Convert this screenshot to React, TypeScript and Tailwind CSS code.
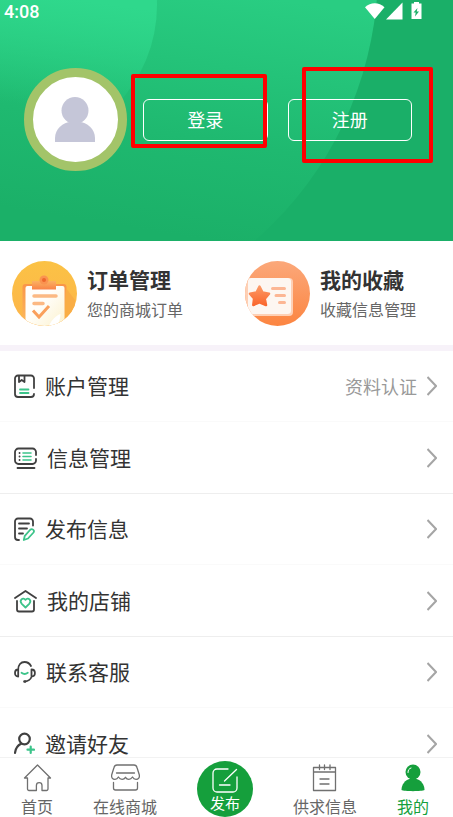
import type { ReactNode } from "react";

const statusIcons = (
  <svg width="58" height="18" viewBox="0 0 58 18" fill="#fff" aria-hidden="true">
    <path d="M0 5.2C5.500 -.2 14 -.2 19.500 5.200L9.750 17Z" />
    <path d="M37.500 .500V17.500H21Z" />
    <path
      fillRule="evenodd"
      d="M49 0h5v1.500h2.500v15.500h-10V1.500H49ZM52.500 6l-4 4.500h2.200l-.7 4 4-5h-2.300Z"
    />
  </svg>
);

function OrderIcon() {
  return (
    <svg width="65" height="65" viewBox="0 0 65 65" className="shrink-0" aria-hidden="true">
      <defs>
        <linearGradient id="orderBg" x1="0" y1="0" x2="0" y2="1">
          <stop offset="0" stopColor="#fbc245" />
          <stop offset="1" stopColor="#fdb44a" />
        </linearGradient>
        <linearGradient id="orderClip" x1="0" y1="0" x2="0" y2="1">
          <stop offset="0" stopColor="#fbb262" />
          <stop offset="1" stopColor="#f98347" />
        </linearGradient>
        <linearGradient id="orderSide" x1="0" y1="0" x2="0" y2="1">
          <stop offset="0" stopColor="#fa9548" />
          <stop offset="1" stopColor="#fcbf60" />
        </linearGradient>
        <linearGradient id="orderPaper" x1="0" y1="0" x2="1" y2="1">
          <stop offset="0.4" stopColor="#fffefa" />
          <stop offset="1" stopColor="#fcf0c8" />
        </linearGradient>
        <clipPath id="orderCircle">
          <circle cx="32.500" cy="32.500" r="32.500" />
        </clipPath>
      </defs>
      <g clipPath="url(#orderCircle)">
        <rect width="65" height="65" fill="url(#orderBg)" />
        <rect x="10.500" y="23" width="44" height="46" rx="3" fill="url(#orderSide)" />
        <path d="M54 27l9 12v27H52Z" fill="#f9ad45" />
        <rect x="13.500" y="25" width="39" height="45" rx="2" fill="url(#orderPaper)" />
        <path d="M48.500 53c-4 1-10 7-12 13h8c2-3 4-9 4-13Z" fill="#fff" />
        <path d="M20 20h24v8.500H20Z" fill="url(#orderClip)" />
        <circle cx="32" cy="19" r="4.500" fill="#fa9350" />
        <circle cx="32" cy="19" r="2" fill="#ed672c" />
        <g stroke="#fcb983" strokeWidth="3.500" strokeLinecap="round" fill="none">
          <path d="M22 35h22M22 42.500h9" />
          <path d="M21 49.500l6 6.500 10-11" stroke="#faa05c" strokeWidth="3" strokeLinecap="butt" />
        </g>
      </g>
    </svg>
  );
}

function FavoriteIcon() {
  return (
    <svg width="65" height="65" viewBox="0 0 65 65" className="shrink-0" aria-hidden="true">
      <defs>
        <linearGradient id="favBg" x1="0" y1="0" x2="0" y2="1">
          <stop offset="0" stopColor="#fba87a" />
          <stop offset="1" stopColor="#fc8541" />
        </linearGradient>
        <linearGradient id="favStar" x1="0" y1="0" x2="0" y2="1">
          <stop offset="0" stopColor="#fc9865" />
          <stop offset="1" stopColor="#fa672e" />
        </linearGradient>
        <clipPath id="favCircle">
          <circle cx="32.500" cy="32.500" r="32.500" />
        </clipPath>
      </defs>
      <g clipPath="url(#favCircle)">
        <rect width="65" height="65" fill="url(#favBg)" />
        <rect x="-3" y="17" width="51" height="38" rx="4" fill="#fed0b5" />
        <rect x="3" y="17" width="43" height="36" rx="3.500" fill="#fdf6f1" />
        <path
          d="M14.500 25.500l3 6 6.500 1.200-4.200 5 1.200 6.300-6.500-2.700-6.200 2.700.8-6.500-4.100-4.800 6.500-1.200Z"
          fill="url(#favStar)"
          stroke="url(#favStar)"
          strokeWidth="2.500"
          strokeLinejoin="round"
        />
        <path d="M27.500 27.500H39.500M31 34.500H39.500M34.500 41.500H39.500" stroke="#fcb694" strokeWidth="3" strokeLinecap="round" />
      </g>
    </svg>
  );
}

type LineIconProps = { children: ReactNode; width?: number };

function LineIcon({ children, width = 22 }: LineIconProps) {
  return (
    <svg
      width={width}
      height="24"
      viewBox={`0 0 ${width} 24`}
      className="shrink-0"
      fill="none"
      stroke="#404040"
      strokeWidth="1.8"
      strokeLinecap="round"
      strokeLinejoin="round"
      aria-hidden="true"
    >
      {children}
    </svg>
  );
}

const menu = [
  {
    label: "账户管理",
    note: "资料认证",
    icon: (
      <LineIcon width={21}>
        <path d="M20 14V4.500a3 3 0 0 0-3-3H4a3 3 0 0 0-3 3V20a3 3 0 0 0 3 3h13a3 3 0 0 0 3-3M5 1.500v6.500l2.700-2 2.800 2V1.500" />
        <path d="M6 15.500h8.500M6 19h8.500" stroke="#3cc48a" />
      </LineIcon>
    ),
  },
  {
    label: "信息管理",
    icon: (
      <LineIcon width={23}>
        <path d="M22 9V6a3.500 3.500 0 0 0-3.500-3.500h-14A3.500 3.500 0 0 0 1 6v8.500A3.500 3.500 0 0 0 4.500 18h14a3.500 3.500 0 0 0 3.500-3.500V13M3.500 22h17" />
        <path d="M5.500 7h.1M5.500 10.500h.1M5.500 14h.1" />
        <path d="M9 7h8M9 10.500h8M9 14h8" stroke="#3cc48a" strokeWidth="1.6" />
      </LineIcon>
    ),
  },
  {
    label: "发布信息",
    icon: (
      <LineIcon width={21}>
        <path d="M19 8.500V4.500a3 3 0 0 0-3-3H4a3 3 0 0 0-3 3V20a3 3 0 0 0 3 3h1M5 6.500h10M5 11.500h8M5 16.500h4" />
        <path d="M9.800 23l1-4.200 5.200-5.800c2-2 5 .2 3.500 2.500l-5.500 6Z" stroke="#3cc48a" />
      </LineIcon>
    ),
  },
  {
    label: "我的店铺",
    icon: (
      <LineIcon width={23}>
        <path d="M1 9L11.500 2 22 9M3 12v8.500a2 2 0 0 0 2 2h13a2 2 0 0 0 2-2V12" />
        <path d="M11.500 18.500l-3.700-3.700c-3-3.500 1-7 3.700-4 2.700-3 6.700.5 3.700 4Z" stroke="#3cc48a" />
      </LineIcon>
    ),
  },
  {
    label: "联系客服",
    icon: (
      <LineIcon>
        <path d="M4.200 9.500v7C2 16.500 1 15 1 13s1-3.500 3.200-3.500C4.200 5 6.800 2 10.500 2c3 0 5 1.200 6.500 4M17.500 9.500v7c2.400 0 3.400-1.500 3.400-3.500s-1-3.500-3.400-3.500ZM17.500 17c-1.200 2.800-3.300 4.300-6.500 4.500" />
        <path d="M10.500 21.500h.5" strokeWidth="2.600" />
        <path d="M7.500 12.800c2 1.500 4.300 1.500 6.300 0" stroke="#3cc48a" />
      </LineIcon>
    ),
  },
  {
    label: "邀请好友",
    icon: (
      <LineIcon width={21}>
        <g strokeWidth="2.2">
          <circle cx="10.500" cy="7" r="5.300" />
          <path d="M7 11.800c-3.500 1.700-5.500 4.700-6 9.200" />
          <path d="M16.700 14.500v6.500M13.500 17.700h6.500" stroke="#3cc48a" />
        </g>
      </LineIcon>
    ),
  },
];

const navIcons: Record<string, ReactNode> = {
  home: (
    <path d="M1.500 14L14.500 1l13 13H25v11a1.500 1.500 0 0 1-1.500 1.500H19V21.500a2.800 2.800 0 0 0-5.600 0v5H6A1.500 1.500 0 0 1 4.500 25V14Z" />
  ),
  shop: (
    <>
      <path d="M6 1h17c1.600 0 2.600.9 3 2.500l2.200 7c.8 3-.9 4.800-3.200 4.800-1.700 0-2.700-.8-3.500-2.300-1 1.500-2.100 2.300-3.700 2.300-1.500 0-2.600-.8-3.300-2-.8 1.200-1.900 2-3.400 2-1.600 0-2.700-.8-3.700-2.300-.8 1.500-1.800 2.300-3.400 2.300-2.400 0-4-1.800-3.200-4.800l2.200-7C3.400 1.900 4.400 1 6 1Z" />
      <path d="M5.500 9h18M2.500 18.500v5.500a2 2 0 0 0 2 2h20a2 2 0 0 0 2-2v-5.500" />
    </>
  ),
  demand: <path d="M3.500 3.500h22V26.500h-22ZM3.500 8h22M9.500 1v4.500M14.500 1v4.500M20 1v4.500M10 15h9M10 20h9" />,
};

function NavItem({ label, icon }: { label: string; icon: string }) {
  return (
    <a href={`#${icon}`} className="flex flex-col items-center pt-[6px] text-[#666]">
      <svg
        width="29"
        height="28"
        viewBox="0 0 29 28"
        fill="none"
        stroke="#707070"
        strokeWidth="1.3"
        strokeLinejoin="round"
        strokeLinecap="round"
        aria-hidden="true"
      >
        {navIcons[icon]}
      </svg>
      <span className="mt-1 text-base leading-5">{label}</span>
    </a>
  );
}

export default function App() {
  return (
    <div className="flex h-screen flex-col overflow-hidden bg-white font-['Noto_Sans_CJK_SC',sans-serif] text-[#333]">
      <header className="relative h-[241px] shrink-0 overflow-hidden bg-[#1aaf68] text-white">
        <svg className="absolute left-0 top-0" width="453" height="241" viewBox="0 0 453 241" aria-hidden="true">
          <defs>
            <linearGradient id="bigArc" gradientUnits="userSpaceOnUse" x1="220" y1="-10" x2="180" y2="236">
              <stop offset="0" stopColor="#29cd82" />
              <stop offset="0.6" stopColor="#1fb970" />
              <stop offset="1" stopColor="#1bb068" />
            </linearGradient>
            <linearGradient id="smallArc" gradientUnits="userSpaceOnUse" x1="80" y1="0" x2="65" y2="110">
              <stop offset="0" stopColor="#2fd88c" />
              <stop offset="1" stopColor="#2fd88c" stopOpacity="0" />
            </linearGradient>
          </defs>
          <circle cx="19" cy="-30" r="359" fill="url(#bigArc)" />
          <circle cx="13" cy="5" r="144" fill="url(#smallArc)" />
        </svg>

        <div className="relative flex h-6 items-start justify-between pl-1 pr-[30px]">
          <span className="font-[Roboto] text-lg font-medium leading-6">4:08</span>
          <span className="pt-[2px]">{statusIcons}</span>
        </div>

        <div className="relative mt-11 flex items-center pl-6 pr-[41px]">
          <div className="size-[103px] shrink-0 rounded-full border-9 border-[#a3c469] bg-white">
            <svg viewBox="0 0 85 85" aria-label="头像" role="img">
              <g fill="#c5c6d8">
                <circle cx="42" cy="33.500" r="13.500" />
                <path d="M22 65v-4c0-9 8-16 16-16h8c8 0 16 7 16 16v4Z" />
              </g>
            </svg>
          </div>
          <div className="ml-4 flex flex-1 gap-5">
            <button className="h-[42px] flex-1 rounded-md border border-white pb-[2px] text-lg">登录</button>
            <button className="h-[42px] flex-1 rounded-md border border-white pb-[2px] text-lg">注册</button>
          </div>
        </div>

        {/* highlight boxes over the two buttons */}
        <div className="absolute left-[131px] top-[74px] h-[74px] w-[136px] rounded-xs border-4 border-[#ff0000]" />
        <div className="absolute left-[302px] top-[67px] h-[96px] w-[131px] rounded-xs border-4 border-[#ff0000]" />
      </header>

      <main className="flex-1 overflow-hidden">
        <section className="grid h-[110px] grid-cols-[233px_1fr] border-b-6 border-[#f7f2f9]">
          <a href="#orders" className="flex items-center gap-[10px] pl-3">
            <OrderIcon />
            <span className="flex flex-col pt-1">
              <strong className="text-[21px] font-bold leading-7">订单管理</strong>
              <span className="text-base leading-8 text-[#666]">您的商城订单</span>
            </span>
          </a>
          <a href="#favorites" className="flex items-center gap-[10px] pl-3">
            <FavoriteIcon />
            <span className="flex flex-col pt-1">
              <strong className="text-[21px] font-bold leading-7">我的收藏</strong>
              <span className="text-base leading-8 text-[#666]">收藏信息管理</span>
            </span>
          </a>
        </section>

        <ul>
          {menu.map((item) => (
            <li key={item.label} className="h-[71px] border-b border-[#fafafa] even:h-[72px] even:border-[#eee]">
              <a href={`#${item.label}`} className="flex h-full items-center pl-[14px] pr-4">
                {item.icon}
                <span className="ml-[10px] text-[21px]">{item.label}</span>
                {item.note && <span className="ml-auto text-lg text-[#999]">{item.note}</span>}
                <svg
                  className={item.note ? "ml-[10px]" : "ml-auto"}
                  width="10"
                  height="20"
                  viewBox="0 0 10 20"
                  fill="none"
                  stroke="#a5a5a5"
                  strokeWidth="2"
                  aria-hidden="true"
                >
                  <path d="M.500 1L9 10L.500 19" />
                </svg>
              </a>
            </li>
          ))}
        </ul>
      </main>

      <nav className="flex h-[60px] shrink-0 items-start justify-between border-t border-[#f2f2f2] bg-white pl-[21px] pr-6">
        <NavItem label="首页" icon="home" />
        <NavItem label="在线商城" icon="shop" />
        <a href="#publish" className="mt-[3px] flex size-14 flex-col items-center rounded-full bg-[#159f3c] pt-[7px] text-white">
          <svg
            width="26"
            height="25"
            viewBox="0 0 26 25"
            fill="none"
            stroke="#fff"
            strokeWidth="1.3"
            strokeLinecap="round"
            aria-hidden="true"
          >
            <path d="M16 1H5a4 4 0 0 0-4 4v15a4 4 0 0 0 4 4h16a4 4 0 0 0 4-4V9M24.500 1.500L12.500 13M7.500 17H18" />
          </svg>
          <span className="text-[15px] leading-5">发布</span>
        </a>
        <NavItem label="供求信息" icon="demand" />
        <a href="#me" className="flex flex-col items-center pt-[6px] text-[#159f3c]">
          <svg width="24" height="28" viewBox="0 0 24 28" fill="#159f3c" aria-hidden="true">
            <circle cx="12" cy="8" r="7.500" />
            <path d="M.500 26c0-6 4-10 8-11h7c4 1 8 5 8 11-2 1.500-21 1.500-23 0Z" />
            <path d="M7 8.500c0-2.500 1-4 3-4.500" stroke="#fff" fill="none" strokeLinecap="round" />
          </svg>
          <span className="mt-1 text-base leading-5">我的</span>
        </a>
      </nav>
    </div>
  );
}
